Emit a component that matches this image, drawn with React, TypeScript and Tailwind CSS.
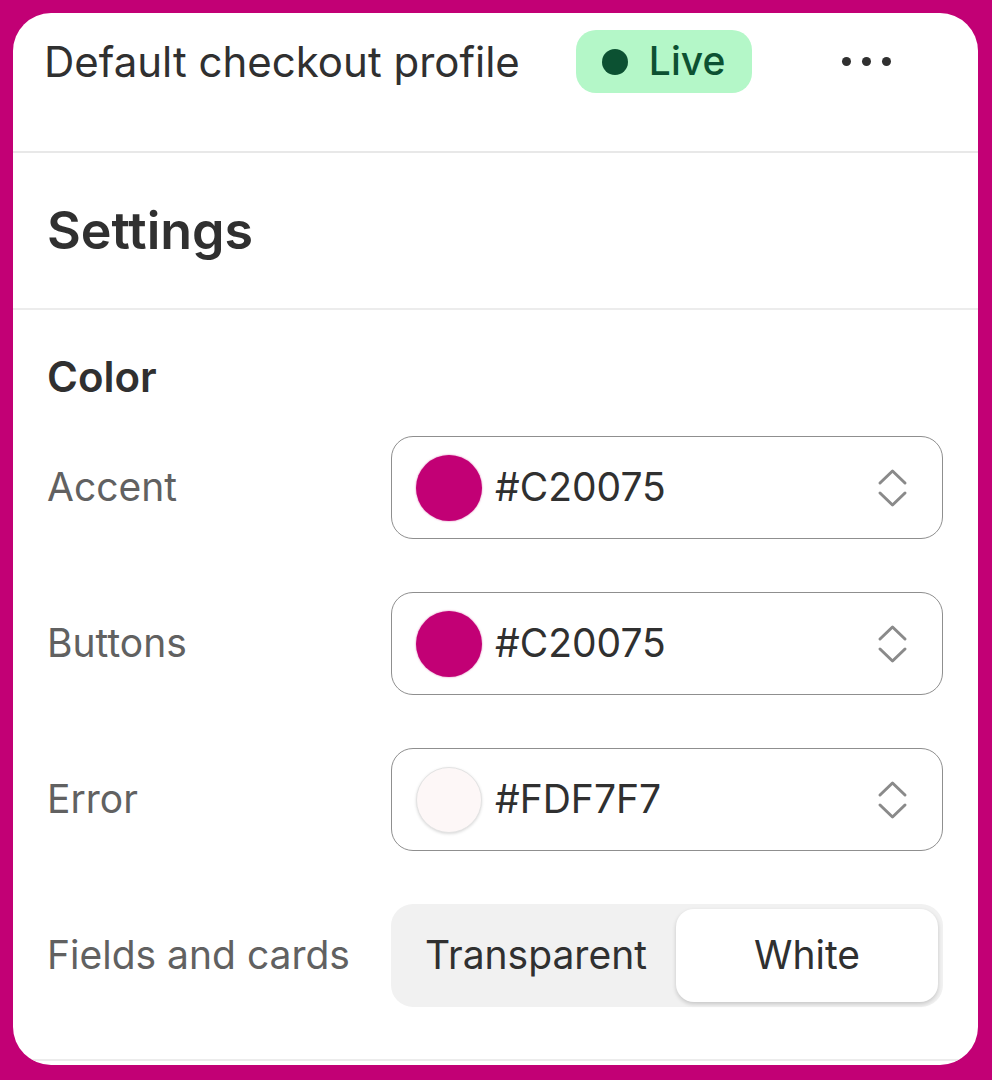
const font = { fontFamily: 'Inter, "Noto Sans", sans-serif' };

function Chevrons() {
  return (
    <svg width="31" height="42" viewBox="0 0 31 42" fill="none" stroke="#8a8a8a" strokeWidth="3" strokeLinecap="round" strokeLinejoin="round">
      <path d="M3 16 L15.5 4 L28 16" />
      <path d="M3 26 L15.5 38 L28 26" />
    </svg>
  );
}

function ColorRow({ label, value, swatch, light }: { label: string; value: string; swatch: string; light?: boolean }) {
  return (
    <div className="flex items-center">
      <div className="w-[344px] text-[39px] text-[#616161]">{label}</div>
      <div className="flex h-[103px] flex-1 items-center rounded-[22px] border-[1.5px] border-[#8f8f8f] pl-[24px] pr-[34px]">
        <div
          className={
            light
              ? "h-[66px] w-[66px] rounded-full border border-[#e3e3e3] shadow-[0_1px_3px_rgba(0,0,0,0.15)]"
              : "h-[66px] w-[66px] rounded-full shadow-[0_0_2px_rgba(194,0,117,0.6)]"
          }
          style={{ backgroundColor: swatch }}
        />
        <span className="ml-[13px] text-[39px] text-[#303030]">{value}</span>
        <div className="ml-auto flex items-center">
          <Chevrons />
        </div>
      </div>
    </div>
  );
}

export default function App() {
  return (
    <div className="h-[1080px] bg-[#C20075] pb-[15px] pl-[13px] pr-[14px] pt-[13px]" style={font}>
      <div className="flex h-full flex-col overflow-hidden rounded-[38px] bg-white">
        <div className="flex h-[140px] shrink-0 items-start border-b-2 border-[#e8e8e8] pl-[31px] pr-[87px] pt-[17px]">
          <div className="flex h-[63px] items-center">
            <span className="text-[42px] text-[#303030]">Default checkout profile</span>
          </div>
          <div className="ml-[56px] flex h-[63px] w-[176px] items-center rounded-[20px] bg-[#b4f7c8] pl-[26px]">
            <span className="h-[26px] w-[26px] rounded-full bg-[#0c5132]" />
            <span className="ml-[21px] text-[39px] font-medium text-[#0c5132]">Live</span>
          </div>
          <div className="ml-auto flex h-[63px] items-center gap-[11px]">
            <span className="h-[9px] w-[9px] rounded-full bg-[#303030]" />
            <span className="h-[9px] w-[9px] rounded-full bg-[#303030]" />
            <span className="h-[9px] w-[9px] rounded-full bg-[#303030]" />
          </div>
        </div>

        <div className="flex h-[157px] shrink-0 items-center border-b-2 border-[#ececec] pl-[34px]">
          <h1 className="text-[52px] font-semibold text-[#303030]">Settings</h1>
        </div>

        <div className="flex flex-1 flex-col border-b-2 border-[#ececec] pl-[34px] pr-[35px] pt-[38px]">
          <h2 className="text-[42px] font-semibold leading-[58px] text-[#303030]">Color</h2>
          <div className="mt-[30px] flex flex-col gap-[53px]">
            <ColorRow label="Accent" value="#C20075" swatch="#C20075" />
            <ColorRow label="Buttons" value="#C20075" swatch="#C20075" />
            <ColorRow label="Error" value="#FDF7F7" swatch="#FDF7F7" light />
            <div className="flex items-center">
              <div className="w-[344px] text-[39px] text-[#616161]">Fields and cards</div>
              <div className="flex h-[103px] flex-1 items-center rounded-[22px] bg-[#f1f1f1] p-[5px]">
                <div className="flex flex-1 items-center justify-center text-[39px] text-[#303030]">Transparent</div>
                <div className="flex h-full w-[262px] items-center justify-center rounded-[18px] bg-white text-[39px] text-[#303030] shadow-[0_2px_4px_rgba(0,0,0,0.18)]">
                  White
                </div>
              </div>
            </div>
          </div>
        </div>
        <div className="h-[4px] shrink-0" />
      </div>
    </div>
  );
}
